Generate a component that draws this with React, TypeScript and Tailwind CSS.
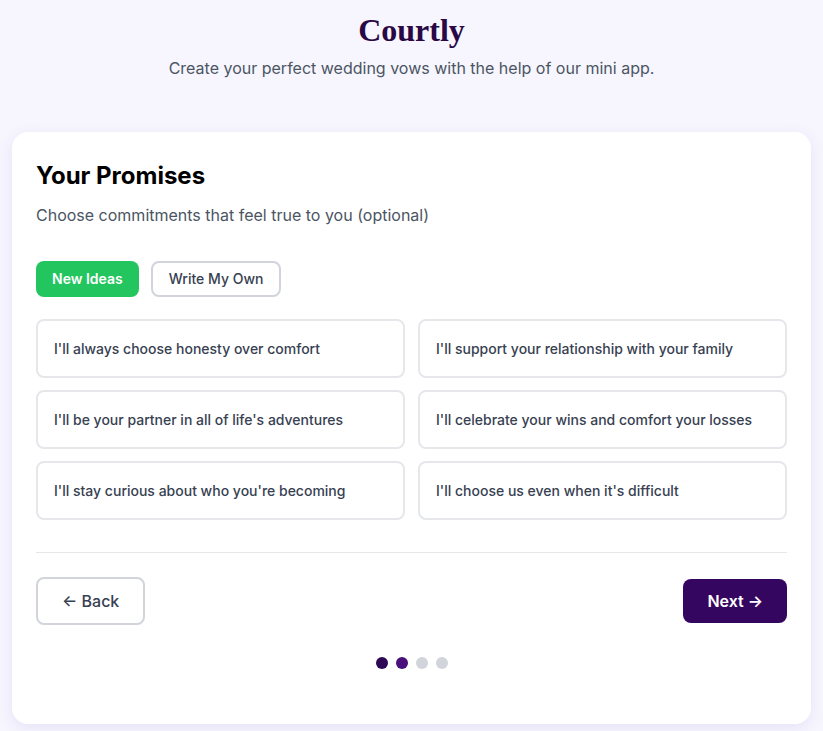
import React from "react";

const promises = [
  "I'll always choose honesty over comfort",
  "I'll support your relationship with your family",
  "I'll be your partner in all of life's adventures",
  "I'll celebrate your wins and comfort your losses",
  "I'll stay curious about who you're becoming",
  "I'll choose us even when it's difficult",
];

export default function App() {
  return (
    <div
      className="min-h-[731px] bg-[#f7f6fe] px-3 pb-2"
      style={{ fontFamily: "Inter, 'Noto Sans', sans-serif" }}
    >
      <header className="flex flex-col items-center pt-[10px]">
        <h1
          className="text-[32px] font-bold leading-[40px] text-[#2a0845]"
          style={{ fontFamily: "'Liberation Serif', serif" }}
        >
          Courtly
        </h1>
        <p className="mt-[6px] text-base leading-6 text-[#4b5563]">
          Create your perfect wedding vows with the help of our mini app.
        </p>
      </header>

      <main className="mt-[52px] rounded-2xl bg-white px-6 pt-7 pb-[55px] shadow-[0_4px_16px_rgba(80,60,180,0.10)]">
        <h2 className="text-2xl font-bold leading-8 text-black">Your Promises</h2>
        <p className="mt-[11px] text-base leading-6 text-[#4b5563]">
          Choose commitments that feel true to you (optional)
        </p>

        <div className="mt-[34px] flex gap-3">
          <button className="h-9 rounded-lg bg-[#22c55e] px-4 text-sm font-semibold text-white">
            New Ideas
          </button>
          <button className="h-9 rounded-lg border-2 border-[#d1d5db] bg-white px-4 text-sm font-medium text-[#374151]">
            Write My Own
          </button>
        </div>

        <div className="mt-[22px] grid grid-cols-2 gap-x-[13px] gap-y-3">
          {promises.map((p) => (
            <button
              key={p}
              className="flex h-[59px] items-center rounded-lg border-2 border-[#e5e7eb] bg-white px-4 text-left text-sm font-medium text-[#374151]"
            >
              {p}
            </button>
          ))}
        </div>

        <div className="mt-8 border-t border-[#e5e7eb]" />

        <div className="mt-6 flex items-center justify-between">
          <button className="h-12 rounded-lg border-2 border-[#d1d5db] bg-white px-6 text-base font-medium text-[#374151]">
            ← Back
          </button>
          <button className="h-11 rounded-lg bg-[#35065f] px-6 text-base font-semibold text-white">
            Next →
          </button>
        </div>

        <div className="mt-[32px] flex justify-center gap-2">
          <span className="h-3 w-3 rounded-full bg-[#2e0854]" />
          <span className="h-3 w-3 rounded-full bg-[#4a0f7a]" />
          <span className="h-3 w-3 rounded-full bg-[#d1d5db]" />
          <span className="h-3 w-3 rounded-full bg-[#d1d5db]" />
        </div>
      </main>
    </div>
  );
}
